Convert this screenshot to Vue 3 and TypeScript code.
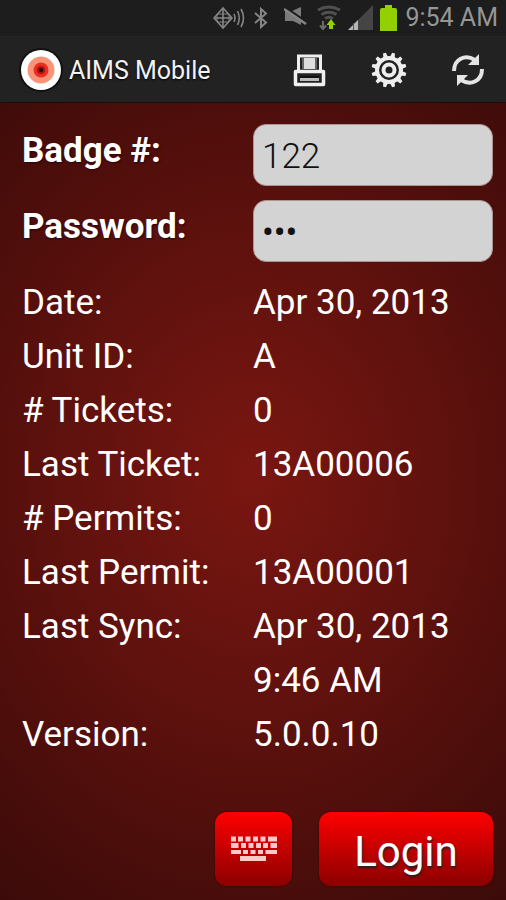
<script setup lang="ts">
import { ref } from 'vue'

interface InfoRow {
  label: string
  lines: string[]
}

const badge = ref('122')
const password = ref('122')

const info: InfoRow[] = [
  { label: 'Date:', lines: ['Apr 30, 2013'] },
  { label: 'Unit ID:', lines: ['A'] },
  { label: '# Tickets:', lines: ['0'] },
  { label: 'Last Ticket:', lines: ['13A00006'] },
  { label: '# Permits:', lines: ['0'] },
  { label: 'Last Permit:', lines: ['13A00001'] },
  { label: 'Last Sync:', lines: ['Apr 30, 2013', '9:46 AM'] },
  { label: 'Version:', lines: ['5.0.0.10'] },
]

const teeth = Array.from({ length: 12 }, (_, i) => i * 30)
</script>

<template>
  <div class="screen">
    <div class="status">
      <svg class="i-gps" width="33" height="24" viewBox="0 0 33 24" fill="none" stroke="#858585" stroke-width="1.600">
        <path d="M1 12 L10 2 L19 12 L10 22 Z" />
        <path d="M4 8 H16 V16 H4 Z" stroke-width="1" />
        <path d="M1 12 H19 M10 2 V22" />
        <path d="M21 8 Q23 12 21 16 M24.500 5 Q28 12 24.500 19 M28 3 Q33 12 28 21" />
      </svg>
      <svg class="i-bt" width="14" height="24" viewBox="0 0 14 24" fill="none" stroke="#858585" stroke-width="2">
        <path d="M1 7 L12 16.500 L7 21 V3 L12 7.500 L1 17" />
      </svg>
      <svg class="i-mute" width="23" height="24" viewBox="0 0 23 24">
        <path d="M1 5 H8 L17 1 V19 L9 15 H1 Z" fill="#7a7a7a" />
        <path d="M0 1 L22 16" stroke="#1d1d1d" stroke-width="3" />
        <path d="M0 3 L22 18" stroke="#858585" stroke-width="2.500" />
      </svg>
      <svg class="i-wifi" width="24" height="26" viewBox="0 0 24 26">
        <g fill="none" stroke="#505050" stroke-width="3">
          <path d="M1 5 Q12 -1 23 5" />
          <path d="M4.500 9.500 Q12 5 19.500 9.500" />
          <path d="M8 13.500 Q12 11 16 13.500" />
        </g>
        <path d="M6 16 V23 M3 20.500 L6 24 L9 20.500" fill="none" stroke="#6b6b6b" stroke-width="2" />
        <path d="M14 14 L18.500 20 H16 V24 H12 V20 H9.500 Z" fill="#93d000" />
      </svg>
      <svg class="i-signal" width="27" height="26" viewBox="0 0 27 26">
        <path d="M26 0 V25 H1 Z" fill="#454545" />
        <path d="M11 15 V25 H1 Z" fill="#b5b5b5" />
        <path d="M6.500 18 V25" stroke="#555" />
      </svg>
      <svg class="i-battery" width="17" height="26" viewBox="0 0 17 26">
        <path d="M5 0 H12 V3 H15 Q17 3 17 5 V26 H0 V5 Q0 3 2 3 H5 Z" fill="#93d000" />
      </svg>
      <span class="clock">9:54 AM</span>
    </div>

    <header class="bar">
      <svg class="logo" width="44" height="44" viewBox="0 0 44 44">
        <circle cx="22" cy="22" r="22" fill="#111" />
        <circle cx="22" cy="22" r="20" fill="#fff" />
        <circle cx="22" cy="22" r="13.500" fill="#fa9479" />
        <circle cx="22" cy="22" r="7.500" fill="#ef2a20" />
        <circle cx="22" cy="22" r="4" fill="#a51410" />
        <circle cx="22" cy="22" r="2" fill="#180404" />
      </svg>
      <h1>AIMS Mobile</h1>
      <nav class="tools">
        <button type="button" aria-label="Print">
          <svg width="36" height="36" viewBox="0 0 36 36">
            <path d="M6.500 19 V4 H28.500 V19" fill="none" stroke="#eee" stroke-width="3" />
            <rect x="11" y="6" width="13" height="11" fill="#dedede" />
            <path d="M11 5.500 V17 M24 5.500 V17" stroke="#666" stroke-width="2" />
            <path d="M3.500 19.500 H31.500 V32.500 H3.500 Z" fill="#222" stroke="#f0f0f0" stroke-width="3.500" stroke-linejoin="round" />
            <rect x="8" y="25" width="19" height="4" fill="#bbb" />
            <path d="M8 25 H27" stroke="#111" stroke-width="2" />
          </svg>
        </button>
        <button type="button" aria-label="Settings">
          <svg width="36" height="36" viewBox="0 0 36 36">
            <g fill="#eee">
              <path v-for="a in teeth" :key="a" d="M15.500 6 L16.500 0.500 H19.500 L20.500 6 Z" :transform="`rotate(${a + 15} 18 18)`" />
            </g>
            <circle cx="18" cy="18" r="12" fill="none" stroke="#eee" stroke-width="4" />
            <circle cx="18" cy="18" r="5.500" fill="none" stroke="#eee" stroke-width="4" />
          </svg>
        </button>
        <button type="button" aria-label="Sync">
          <svg width="36" height="36" viewBox="0 0 36 36">
            <g fill="none" stroke="#e4e4e4" stroke-width="4">
              <path d="M4 19 C4 7 15 2 25 8" />
              <path d="M32 17 C32 29 21 34 11 28" />
            </g>
            <path d="M29 2 V13 H18 Z M7 34 V23 H18 Z" fill="#e4e4e4" />
          </svg>
        </button>
      </nav>
    </header>

    <form class="body" @submit.prevent>
      <div class="fields">
        <label for="badge">Badge #:</label>
        <input id="badge" v-model="badge" type="text" />
        <label for="password">Password:</label>
        <input id="password" v-model="password" type="password" />
      </div>

      <dl class="info">
        <template v-for="row in info" :key="row.label">
          <dt>{{ row.label }}</dt>
          <dd>
            <div v-for="line in row.lines" :key="line">{{ line }}</div>
          </dd>
        </template>
      </dl>

      <div class="actions">
        <button type="button" class="red keys" aria-label="Keyboard">
          <svg width="46" height="26" viewBox="0 0 46 26" fill="none" stroke="#ffc9c9">
            <path d="M0 3 H5 M7 3 H12 M14.500 3 H19.500 M22 3 H27 M29.500 3 H34.500 M37 3 H46" stroke-width="5" />
            <path d="M0 9.500 H7.500 M10 9.500 H15 M17.500 9.500 H22.500 M25 9.500 H30 M32 9.500 H37 M39.500 9.500 H46" stroke-width="5" />
            <path d="M0 16 H10 M12 16 H17 M19.500 16 H24.500 M27 16 H32 M34.500 16 H46" stroke-width="4" />
            <path d="M9 22.500 H35" stroke-width="5" />
          </svg>
        </button>
        <button type="submit" class="red login">Login</button>
      </div>
    </form>
  </div>
</template>

<style>
body {
  margin: 0;
  background: #3b0b09;
}
</style>

<style scoped>
.screen {
  display: flex;
  flex-direction: column;
  min-height: 100vh;
  font-family: Roboto, "Liberation Sans", sans-serif;
  color: #fff;
}

.status {
  display: flex;
  align-items: center;
  justify-content: flex-end;
  height: 36px;
  padding-right: 8px;
  background: #1d1d1d;
  border-bottom: 1px solid #252525;
}

.i-gps { margin-right: 8px; }
.i-bt { margin-right: 16px; }
.i-mute { margin-right: 10px; }
.i-wifi,
.i-signal { margin-right: 6px; }
.i-battery { margin-right: 8px; }

.clock {
  font-size: 25px;
  line-height: 36px;
  color: #969696;
}

.bar {
  display: flex;
  align-items: center;
  height: 65px;
  padding: 0 20px 0 19px;
  background: #222;
  border-bottom: 1px solid #1a0c0b;
}

.logo {
  flex: none;
}

h1 {
  flex: 1;
  margin: 0 0 0 6px;
  padding-top: 2px;
  font-size: 25px;
  font-weight: 400;
  line-height: 32px;
  white-space: nowrap;
  color: #f3f3f3;
  text-shadow: 0 1px 2px #000;
}

.tools {
  display: flex;
  gap: 43px;
}

.tools button {
  display: flex;
  padding: 0;
  border: 0;
  background: none;
}

.body {
  flex: 1;
  display: flex;
  flex-direction: column;
  padding: 21px 13px 14px 22px;
  background: radial-gradient(ellipse 85% 66% at 50% 47%, #7a1611 0%, #62120e 40%, #4d0e0b 72%, #3b0b09 100%);
}

.fields,
.info {
  display: grid;
  grid-template-columns: 231px 1fr;
}

.fields {
  row-gap: 14px;
}

.fields label {
  font-size: 35px;
  font-weight: 700;
  line-height: 54px;
  text-shadow: 1px 1px 2px #2b0504;
}

.fields input {
  box-sizing: border-box;
  width: 100%;
  min-width: 0;
  height: 62px;
  padding: 2px 8px 0;
  border: 1px solid #aa9492;
  border-radius: 13px;
  outline: 0;
  background: #d3d3d3;
  font-family: inherit;
  font-size: 35px;
  font-weight: 300;
  color: #111;
}

.fields input[type="password"] {
  font-weight: 400;
}

.info {
  margin: 14px 0 0;
  font-size: 35px;
  line-height: 54px;
}

dt,
dd {
  margin: 0;
  white-space: nowrap;
}

.actions {
  display: flex;
  justify-content: flex-end;
  gap: 27px;
  margin-top: auto;
}

.red {
  display: flex;
  align-items: center;
  justify-content: center;
  height: 74px;
  padding: 0;
  border: 0;
  border-radius: 12px;
  background: linear-gradient(#ff0000, #8a0000);
  box-shadow: 0 0 2px #300000;
  color: #fff;
}

.keys {
  width: 77px;
}

.login {
  width: 174px;
  padding-top: 4px;
  font-family: inherit;
  font-size: 42px;
  text-shadow: 1px 2px 2px #222;
}
</style>
